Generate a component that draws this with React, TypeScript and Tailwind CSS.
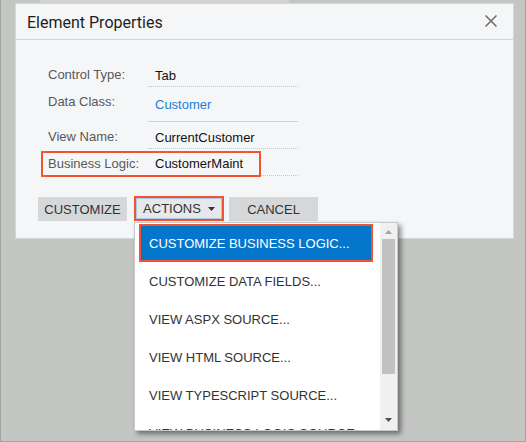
import React from "react";

const rows = [
  { label: "Control Type:", value: "Tab", line: "dotted", h: "h-[26px]", lp: "pt-[6px]", vp: "pt-[7px]" },
  { label: "Data Class:", value: "Customer", link: true, line: "solid", h: "h-[35px]", lp: "pt-[7px]", vp: "pt-[10px]" },
  { label: "View Name:", value: "CurrentCustomer", line: "dotted", h: "h-[27px]", lp: "pt-[7px]", vp: "pt-[8px]" },
  { label: "Business Logic:", value: "CustomerMaint", line: "dotted", h: "h-[27px]", lp: "pt-[7px]", vp: "pt-[7px]" },
];

const menu = [
  "CUSTOMIZE BUSINESS LOGIC...",
  "CUSTOMIZE DATA FIELDS...",
  "VIEW ASPX SOURCE...",
  "VIEW HTML SOURCE...",
  "VIEW TYPESCRIPT SOURCE...",
  "VIEW BUSINESS LOGIC SOURCE...",
];

export default function App() {
  return (
    <div className="relative w-[526px] h-[442px] overflow-hidden bg-[#c4c6c4] border-x border-b border-[#a3a3a3] font-['Liberation_Sans',Arial,sans-serif] text-[13px] leading-[15px]">
      <div className="flex h-[3px]">
        <div className="w-[39px]" />
        <div className="w-[249px] bg-[#d2d3d2]" />
      </div>

      {/* dialog */}
      <div className="relative ml-[14px] w-[499px] h-[236px] bg-[#f5f6f8] border border-[#d3d6da]">
        <div className="flex items-center justify-between h-[36px] border-b border-[#d2d5d9] pl-[11px] pr-[16px] pt-[1px]">
          <span className="font-['Roboto',sans-serif] text-[16px] text-[#1e1e1e]">Element Properties</span>
          <svg width="12" height="12" viewBox="0 0 12 12" className="mb-[2px]">
            <path d="M0.5 0.5 L11.5 11.5 M11.5 0.5 L0.5 11.5" stroke="#6b6b6b" strokeWidth="1.5" />
          </svg>
        </div>

        <div className="pt-[21px] pl-[32px]">
          {rows.map((r) => (
            <div key={r.label} className={`flex ${r.h}`}>
              <div className={`w-[100px] text-[#585858] ${r.lp}`}>{r.label}</div>
              <div
                className={`w-[150px] pl-[7px] border-b ${r.vp} ${
                  r.line === "dotted" ? "border-dotted border-[#c4c6c8]" : "border-solid border-[#cfd1d3]"
                } ${r.link ? "text-[#1b7fd3]" : "text-[#111]"}`}
              >
                {r.value}
              </div>
            </div>
          ))}
        </div>

        <div className="flex items-start pl-[22px] mt-[21px]">
          <div className="w-[89px] h-[24px] bg-[#d6d7d9] flex items-center justify-center text-[#333]">CUSTOMIZE</div>
          <div className="ml-[7px] -mt-[1px] w-[90px] h-[25px] border-2 border-[#f0552f]">
            <div className="w-full h-full bg-[#e6e8eb] border border-[#a9c8e2] flex items-center justify-center gap-[7px] text-[#333]">
              <span>ACTIONS</span>
              <svg width="7" height="4" viewBox="0 0 7 4">
                <path d="M0 0 H7 L3.5 4 Z" fill="#333" />
              </svg>
            </div>
          </div>
          <div className="ml-[5px] w-[89px] h-[24px] bg-[#d6d7d9] flex items-center justify-center text-[#333]">CANCEL</div>
        </div>

        {/* highlight annotation */}
        <div className="absolute left-[25px] top-[147px] w-[220px] h-[26px] border-2 border-[#f0552f]" />
      </div>

      {/* dropdown menu */}
      <div className="absolute left-[133px] top-[222px] w-[264px] h-[209px] bg-white border border-[#c9c9c9] shadow-[3px_3px_5px_rgba(0,0,0,0.45)] flex">
        <div className="flex-1 overflow-hidden pt-[1px] pl-[4px]">
          {menu.map((m, i) => (
            <div
              key={m}
              className={`w-[234px] h-[38px] flex items-center ${
                i === 0 ? "bg-[#0477cc] border-2 border-[#f0552f] pl-[8px] text-white" : "pl-[10px] text-[#333]"
              }`}
            >
              {m}
            </div>
          ))}
        </div>
        <div className="w-[17px] bg-[#f0f0f0] flex flex-col items-center">
          <svg width="7" height="4" viewBox="0 0 7 4" className="mt-[7px]">
            <path d="M3.5 0 L7 4 H0 Z" fill="#a3a3a3" />
          </svg>
          <div className="mt-[5px] w-[13px] h-[135px] bg-[#c1c1c1]" />
          <div className="flex-1" />
          <svg width="7" height="4" viewBox="0 0 7 4" className="mb-[8px]">
            <path d="M0 0 H7 L3.5 4 Z" fill="#505050" />
          </svg>
        </div>
      </div>
    </div>
  );
}
